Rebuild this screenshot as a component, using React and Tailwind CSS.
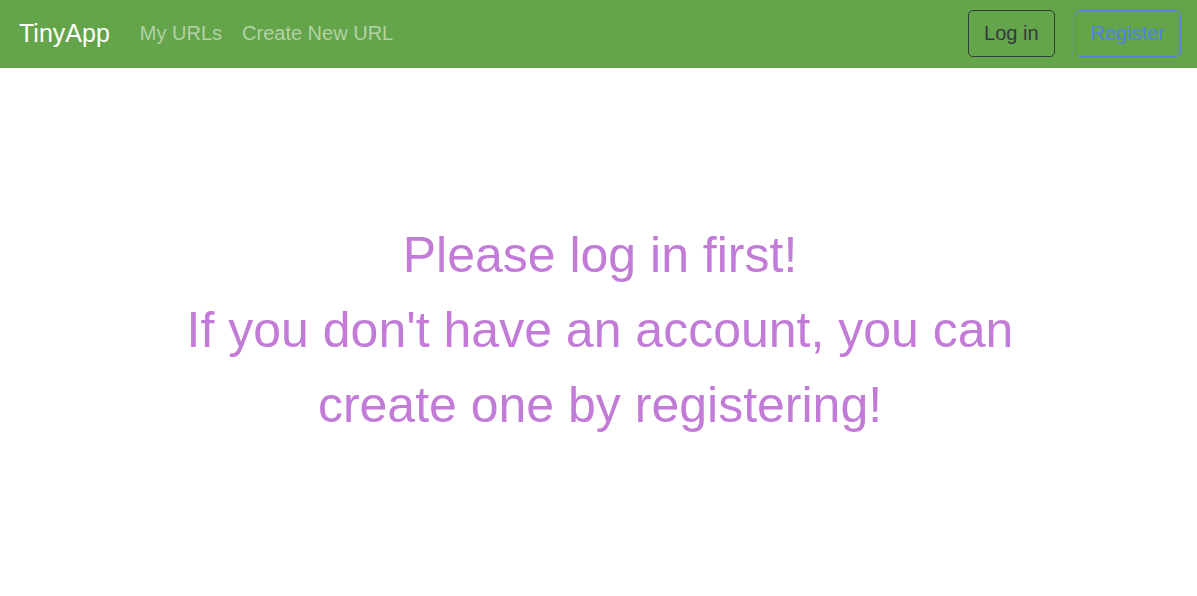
export default function App() {
  const font = { fontFamily: '"Liberation Sans", Arial, sans-serif' };

  return (
    <div className="min-h-[596px] bg-white" style={font}>
      {/* Navbar */}
      <nav className="h-[68px] bg-[#64a44a] flex items-center justify-between pl-[19px] pr-4">
        <div className="flex items-center">
          <a href="#" className="text-[25px] leading-[37.5px] text-white mr-[20px] pb-[1px]">TinyApp</a>
          <a href="#" className="text-[20px] leading-[30px] text-[#b2d2a5] px-[10px] pb-[2px]">My URLs</a>
          <a href="#" className="text-[20px] leading-[30px] text-[#b2d2a5] px-[10px] pb-[2px]">Create New URL</a>
        </div>
        <div className="flex items-center gap-5 pb-[1px]">
          <button className="h-[47px] px-[15px] pb-[2px] text-[20px] leading-[30px] text-[#343a40] border border-[#343a40] rounded-[5px]">
            Log in
          </button>
          <button className="h-[47px] px-[15px] pb-[2px] text-[20px] leading-[30px] text-[#4f83e0] border border-[#4f83e0] rounded-[5px]">
            Register
          </button>
        </div>
      </nav>

      {/* Message */}
      <main className="pt-[150px] flex justify-center">
        <h2 className="w-[900px] ml-[3px] text-center text-[50px] leading-[75px] text-[#c27bd7]">
          Please log in first!
          <br />
          If you don't have an account, you can create one by registering!
        </h2>
      </main>
    </div>
  );
}
